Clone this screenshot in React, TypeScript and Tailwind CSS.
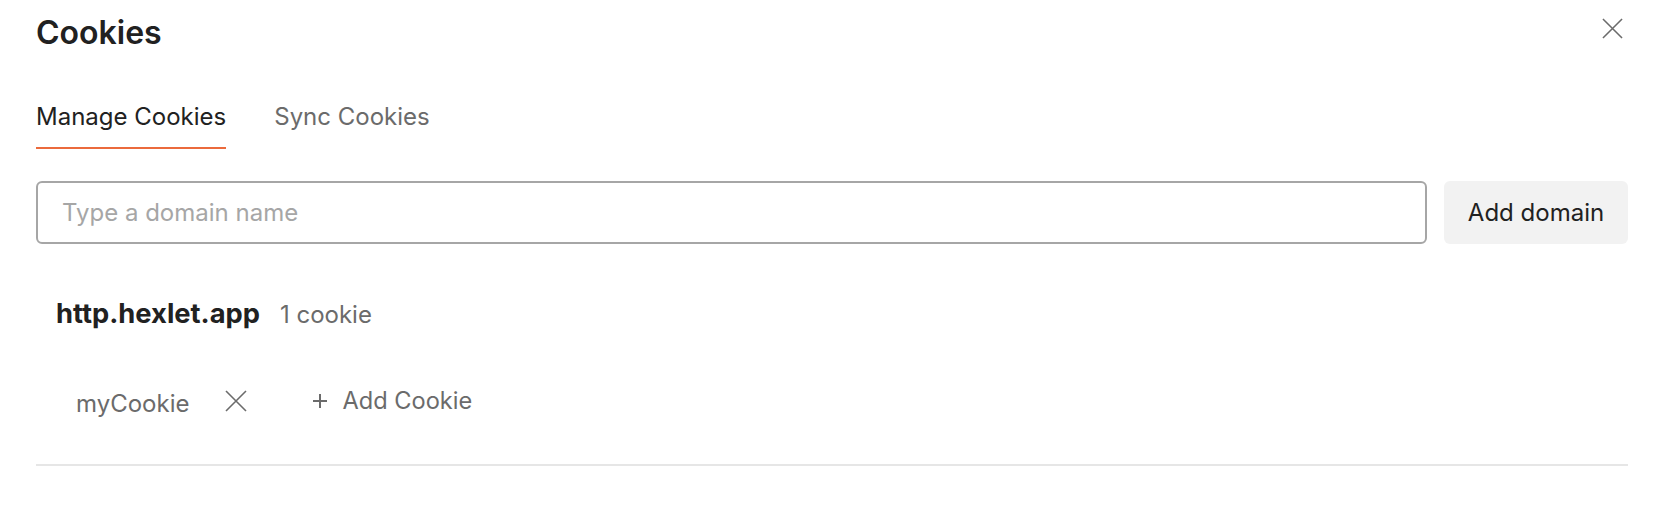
import React from "react";

function XIcon({ size = 22, className = "" }: { size?: number; className?: string }) {
  return (
    <svg width={size} height={size} viewBox="0 0 22 22" className={className} fill="none" stroke="currentColor" strokeWidth="1.6" strokeLinecap="butt">
      <path d="M1 1 L21 21 M21 1 L1 21" />
    </svg>
  );
}

export default function App() {
  return (
    <div className="w-[1660px] h-[506px] bg-white text-[#212121]" style={{ fontFamily: "Inter, 'Noto Sans', sans-serif" }}>
      <div className="pl-[36px] pr-[32px] pt-[13px]">
        <div className="flex items-start justify-between">
          <h1 className="text-[32px] leading-[40px] font-semibold text-[#212121]">Cookies</h1>
          <span className="mt-[5px] mr-[5px] text-[#6b6b6b]">
            <XIcon size={21} />
          </span>
        </div>
        <div className="mt-[48px] flex gap-[48px]">
          <div className="flex flex-col">
            <span className="text-[24px] leading-[32px] text-[#212121]">Manage Cookies</span>
            <div className="mt-[14px] h-[2px] bg-[#eb6a3c]" />
          </div>
          <div className="flex flex-col">
            <span className="text-[24px] leading-[32px] text-[#6b6b6b]">Sync Cookies</span>
          </div>
        </div>
        <div className="mt-[32px] flex gap-[17px]">
          <div className="flex-1 h-[63px] rounded-[6px] border-2 border-[#a6a6a6] flex items-center px-[24px]">
            <span className="text-[24px] text-[#a6a6a6]">Type a domain name</span>
          </div>
          <button className="w-[184px] h-[63px] rounded-[6px] bg-[#f2f2f2] text-[24px] text-[#212121]">Add domain</button>
        </div>
        <div className="mt-[50px] pl-[20px] flex items-baseline gap-[20px]">
          <span className="text-[27.3px] font-bold text-[#212121]">http.hexlet.app</span>
          <span className="text-[24px] text-[#6b6b6b]">1 cookie</span>
        </div>
        <div className="mt-[45px] pl-[40px] flex items-center">
          <span className="text-[24px] text-[#6b6b6b] mt-[6px]">myCookie</span>
          <span className="ml-[36px] text-[#6b6b6b]"><XIcon size={22} /></span>
          <span className="ml-[66px] flex items-center text-[#6b6b6b] text-[24px]">
            <svg width="14" height="14" viewBox="0 0 14 14" stroke="currentColor" strokeWidth="2"><path d="M7 0 V14 M0 7 H14" /></svg>
            <span className="ml-[15px] text-[23.6px]">Add Cookie</span>
          </span>
        </div>
        <div className="mt-[42px] h-[2px] bg-[#e6e6e6]" />
      </div>
    </div>
  );
}
